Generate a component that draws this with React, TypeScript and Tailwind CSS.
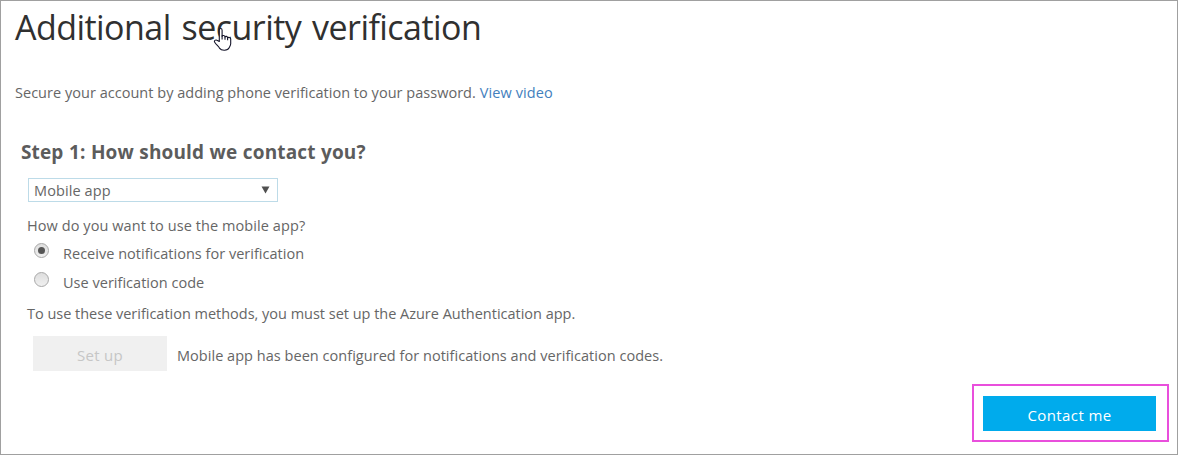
import { useState } from "react";

function HandCursor() {
  return (
    <svg className="absolute left-[212px] top-[26px]" width="19" height="25" viewBox="0 0 19 25" aria-hidden="true">
      <path
        d="M6.3 14.5V3.2C6.3 1 9.1 1 9.1 3.2V9.2C9.6 8 12 8.3 12 10C12.5 8.9 14.6 9.2 14.6 10.9C15.3 10 17.7 10.4 17.7 12.1V16.8C17.7 18.5 16.8 19.5 16 21C14.8 23.8 8.3 23.9 6.7 21.4C5.5 19.3 3.3 17.8 1.7 15.3C.6 13.6 2.5 12.4 4 13.3Z"
        fill="#fff"
        stroke="#15152a"
        strokeWidth="1.1"
        strokeLinejoin="round"
      />
      <path d="M9.1 8.5V12.5M12 9.8V12.8M14.6 10.8V13.2" fill="none" stroke="#15152a" strokeWidth="1.1" />
    </svg>
  );
}

type RadioProps = { label: string; checked: boolean; onSelect: () => void };

function Radio({ label, checked, onSelect }: RadioProps) {
  return (
    <label className="flex h-5 items-start">
      <input type="radio" name="method" className="sr-only" checked={checked} onChange={onSelect} />
      <span className="flex size-[15px] items-center justify-center rounded-full border border-[#a8a8a8] bg-linear-to-b from-[#dedede] to-[#f0f0f0]">
        {checked && <span className="size-[7px] rounded-full bg-[#555]" />}
      </span>
      <span className="ml-[14px] pt-px tracking-[0.02px]">{label}</span>
    </label>
  );
}

export default function App() {
  const [method, setMethod] = useState("notify");
  return (
    <main className="relative flex h-[455px] w-[1178px] flex-col overflow-hidden border border-[#a0a0a0] bg-white font-['Open_Sans',sans-serif] text-[14.5px] leading-5 whitespace-nowrap text-[#666]">
      <h1 className="mt-0.5 ml-[14px] text-[34px] leading-[48px] tracking-[-0.55px] text-[#303030] [word-spacing:2.6px]">
        Additional security verification
      </h1>
      <p className="mt-8 ml-[14px] tracking-[0.025px]">
        Secure your account by adding phone verification to your password.{" "}
        <a href="#video" className="tracking-[0.12px] text-[#4380bd]">View video</a>
      </p>
      <h2 className="mt-[35px] ml-5 text-[19px] leading-7 font-bold tracking-[0.13px] text-[#5c5c5c] [word-spacing:0.4px]">
        Step 1: How should we contact you?
      </h2>
      <button className="mt-3 ml-[27px] flex h-6 w-[250px] items-center justify-between border border-[#bddbe8] pr-[7px] pl-[5px]">
        <span className="pt-0.5 tracking-[0.1px]">Mobile app</span>
        <svg width="9" height="8" viewBox="0 0 9 8" aria-hidden="true">
          <path d="M.5 .5H8.5L4.5 7.5Z" fill="#505050" />
        </svg>
      </button>
      <p className="mt-[14px] ml-[26px] tracking-[0.08px]">How do you want to use the mobile app?</p>
      <div className="mt-[7px] ml-[33px] flex flex-col gap-[9px]">
        <Radio label="Receive notifications for verification" checked={method === "notify"} onSelect={() => setMethod("notify")} />
        <Radio label="Use verification code" checked={method === "code"} onSelect={() => setMethod("code")} />
      </div>
      <p className="mt-3 ml-[26px] tracking-[-0.015px]">
        To use these verification methods, you must set up the Azure Authentication app.
      </p>
      <div className="mt-3 ml-8 flex h-[35px] items-center">
        <button disabled className="flex h-[35px] w-[134px] items-center justify-center bg-[#f0f0f0] pt-0.5 text-[15px] tracking-[0.3px] text-[#c6c6c6]">
          Set up
        </button>
        <span className="ml-2.5 pt-1 tracking-[0.035px]">
          Mobile app has been configured for notifications and verification codes.
        </span>
      </div>
      <div className="mt-[13px] mr-2 flex h-[58px] w-[197px] items-center justify-start self-end border-2 border-[#e94fdc] pl-[9px]">
        <button className="flex h-[35px] w-[173px] items-center justify-center bg-[#00abec] pt-1 text-[15px] tracking-[0.4px] text-white">
          Contact me
        </button>
      </div>
      <HandCursor />
    </main>
  );
}
